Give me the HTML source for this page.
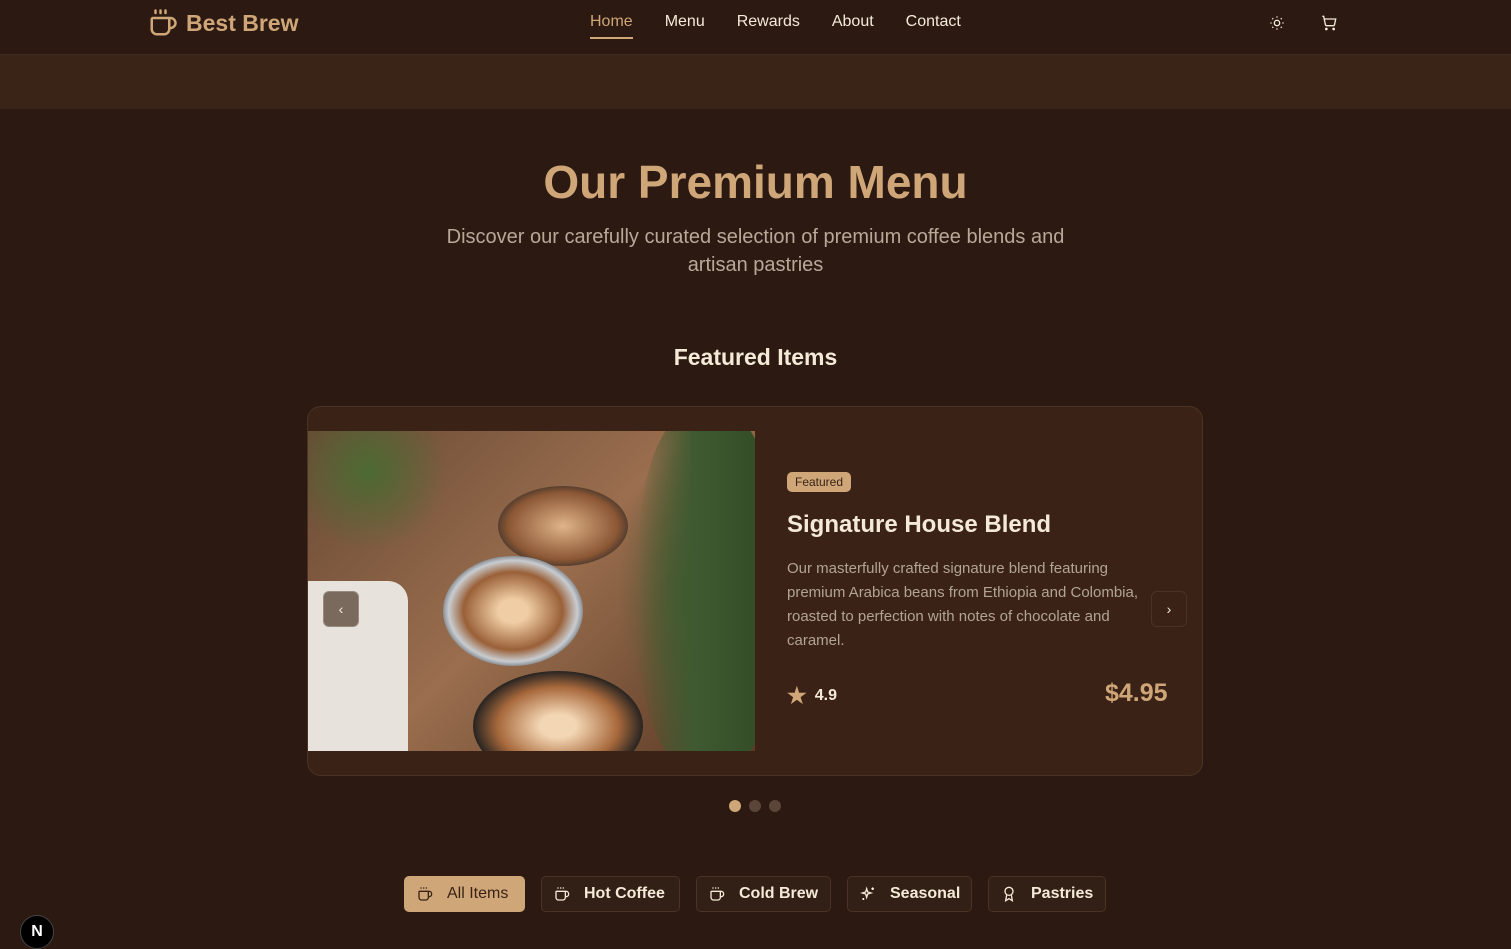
<!DOCTYPE html>
<html><head><meta charset="utf-8"><style>
*{box-sizing:border-box;margin:0;padding:0}
body{width:1511px;height:949px;overflow:hidden;background:#2c1a12;font-family:"Liberation Sans",sans-serif;color:#f5ead8;position:relative}
.nav{height:55px;border-bottom:1px solid #3d2a1e;position:relative}
.logo{position:absolute;left:148px;top:8px;display:flex;align-items:center;gap:8px;color:#cfa677;font-weight:bold;font-size:23px}
.links{position:absolute;left:590px;top:13px;display:flex;gap:32px;font-size:16px;color:#f5ead8}
.links .a{color:#cfa677;border-bottom:2px solid #cfa677;padding-bottom:6px}
.band{height:54px;background:#3a2317}
h1{position:absolute;top:155px;width:100%;text-align:center;font-size:46px;color:#cfa677;font-weight:bold}
.sub{position:absolute;top:223px;left:420px;width:671px;text-align:center;font-size:20px;line-height:28px;color:#b9a898}
h2{position:absolute;top:344px;width:100%;text-align:center;font-size:23px;font-weight:bold}
.card{position:absolute;left:307px;top:406px;width:896px;height:370px;background:#3a2316;border:1px solid #4a3324;border-radius:14px}
.img{position:absolute;left:308px;top:431px;width:447px;height:320px;overflow:hidden;background:
radial-gradient(ellipse 90px 160px at 400px 160px,#3d5a2e,transparent),
radial-gradient(ellipse 80px 80px at 60px 40px,#4c6a32,transparent),
linear-gradient(135deg,#6a4a35,#9a6e4e 50%,#5a3a25)}
.img i{position:absolute;border-radius:50%}
.badge{position:absolute;left:787px;top:472px;background:#cfa677;color:#3a2316;font-size:12px;padding:3px 8px;border-radius:5px}
.title{position:absolute;left:787px;top:511px;font-size:24px;font-weight:bold}
.desc{position:absolute;left:787px;top:557px;width:365px;font-size:15px;line-height:24px;color:#b3a397}
.rate{position:absolute;left:787px;top:683px;font-size:16px;font-weight:bold;display:flex;gap:8px;align-items:center}
.price{position:absolute;left:1105px;top:679px;font-size:25px;font-weight:bold;color:#cfa677}
.arr{position:absolute;width:36px;height:36px;border-radius:6px;display:flex;align-items:center;justify-content:center;font-size:14px}
.dots{position:absolute;top:800px;left:729px;display:flex;gap:8px}
.dots span{width:12px;height:12px;border-radius:50%;background:#5a4538}
.tabs{position:absolute;top:876px;left:404px;display:flex;gap:16px}
.tab{height:36px;border:1px solid #4a3324;border-radius:5px;background:#321f15;display:flex;align-items:center;padding:0 12px;gap:14px;font-size:16px;font-weight:bold;color:#f5ead8;white-space:nowrap;flex-shrink:0}
.tab svg{flex-shrink:0}
.tab.on{background:#cfa677;color:#3a2316;font-weight:normal;border-color:#cfa677}
.n{position:absolute;left:20px;top:915px;width:34px;height:34px;border-radius:50%;background:#000;border:1px solid #444;color:#fff;display:flex;align-items:center;justify-content:center;font-size:16px;font-weight:bold}
</style></head><body>
<div class="nav">
<div class="logo"><svg width="30" height="30" viewBox="0 0 24 24" fill="none" stroke="#cfa677" stroke-width="2" stroke-linecap="round"><path d="M10 2v2M14 2v2M6 2v2"/><path d="M16 8a1 1 0 0 1 1 1v8a4 4 0 0 1-4 4H7a4 4 0 0 1-4-4V9a1 1 0 0 1 1-1h14a4 4 0 1 1 0 8h-1"/></svg>Best Brew</div>
<div class="links"><span class="a">Home</span><span>Menu</span><span>Rewards</span><span>About</span><span>Contact</span></div>
<svg style="position:absolute;left:1269px;top:15px" width="16" height="16" viewBox="0 0 24 24" fill="none" stroke="#f5ead8" stroke-width="2"><circle cx="12" cy="12" r="4"/><path d="M12 2v2M12 20v2M4.9 4.9l1.4 1.4M17.7 17.7l1.4 1.4M2 12h2M20 12h2M6.3 17.7l-1.4 1.4M19.1 4.9l-1.4 1.4"/></svg>
<svg style="position:absolute;left:1321px;top:15px" width="16" height="16" viewBox="0 0 24 24" fill="none" stroke="#f5ead8" stroke-width="2"><circle cx="8" cy="21" r="1"/><circle cx="19" cy="21" r="1"/><path d="M2 2h2l2.6 12.4a2 2 0 0 0 2 1.6h9.7a2 2 0 0 0 2-1.6L22 6H5"/></svg>
</div>
<div class="band"></div>
<h1>Our Premium Menu</h1>
<div class="sub">Discover our carefully curated selection of premium coffee blends and artisan pastries</div>
<h2>Featured Items</h2>
<div class="card"></div>
<div class="img">
<i style="left:190px;top:55px;width:130px;height:80px;background:radial-gradient(#e0b489,#8a5634 60%,#2a2a2a 80%)"></i>
<i style="left:135px;top:125px;width:140px;height:110px;background:radial-gradient(#f0cda4 15%,#9a6038 50%,#c8ccd0 65%,#2a2d30 80%)"></i>
<i style="left:165px;top:240px;width:170px;height:110px;background:radial-gradient(#f3d6b4 15%,#a8693c 50%,#1f1f1f 72%)"></i>
<i style="left:-30px;top:150px;width:130px;height:200px;border-radius:20px;background:#e7e3dc"></i>
<i style="left:330px;top:-20px;width:140px;height:360px;border-radius:40%;background:linear-gradient(90deg,transparent,#3f5a30 40%,#2f4a25)"></i>
</div>
<div class="arr" style="left:323px;top:591px;background:#7a6a5e;border:1px solid #9a8a7e;color:#f5ead8">‹</div>
<div class="arr" style="left:1151px;top:591px;border:1px solid #4a3324;color:#f5ead8">›</div>
<div class="badge">Featured</div>
<div class="title">Signature House Blend</div>
<div class="desc">Our masterfully crafted signature blend featuring premium Arabica beans from Ethiopia and Colombia, roasted to perfection with notes of chocolate and caramel.</div>
<div class="rate"><span style="color:#cfa677;font-size:22px">★</span>4.9</div>
<div class="price">$4.95</div>
<div class="dots"><span style="background:#cfa677"></span><span></span><span></span></div>
<div class="tabs">
<div class="tab on" style="width:121px"><svg width="16" height="16" viewBox="0 0 24 24" fill="none" stroke="currentColor" stroke-width="2"><path d="M10 2v2M14 2v2M6 2v2"/><path d="M16 8a1 1 0 0 1 1 1v8a4 4 0 0 1-4 4H7a4 4 0 0 1-4-4V9a1 1 0 0 1 1-1h14a4 4 0 1 1 0 8h-1"/></svg><span>All Items</span></div>
<div class="tab" style="width:139px"><svg width="16" height="16" viewBox="0 0 24 24" fill="none" stroke="currentColor" stroke-width="2"><path d="M10 2v2M14 2v2M6 2v2"/><path d="M16 8a1 1 0 0 1 1 1v8a4 4 0 0 1-4 4H7a4 4 0 0 1-4-4V9a1 1 0 0 1 1-1h14a4 4 0 1 1 0 8h-1"/></svg><span>Hot Coffee</span></div>
<div class="tab" style="width:135px"><svg width="16" height="16" viewBox="0 0 24 24" fill="none" stroke="currentColor" stroke-width="2"><path d="M10 2v2M14 2v2M6 2v2"/><path d="M16 8a1 1 0 0 1 1 1v8a4 4 0 0 1-4 4H7a4 4 0 0 1-4-4V9a1 1 0 0 1 1-1h14a4 4 0 1 1 0 8h-1"/></svg><span>Cold Brew</span></div>
<div class="tab" style="width:125px"><svg width="16" height="16" viewBox="0 0 24 24" fill="none" stroke="currentColor" stroke-width="2"><path d="M10 4l1.5 5 5 1.5-5 1.5-1.5 5-1.5-5-5-1.5 5-1.5z"/><path d="M19 2v4M17 4h4M5 18v3M3.5 19.5h3"/></svg><span>Seasonal</span></div>
<div class="tab" style="width:118px"><svg width="16" height="16" viewBox="0 0 24 24" fill="none" stroke="currentColor" stroke-width="2"><circle cx="12" cy="8" r="6"/><path d="M15.5 13.5L17 22l-5-3-5 3 1.5-8.5"/></svg><span>Pastries</span></div>
</div>
<div class="n">N</div>
</body></html>
